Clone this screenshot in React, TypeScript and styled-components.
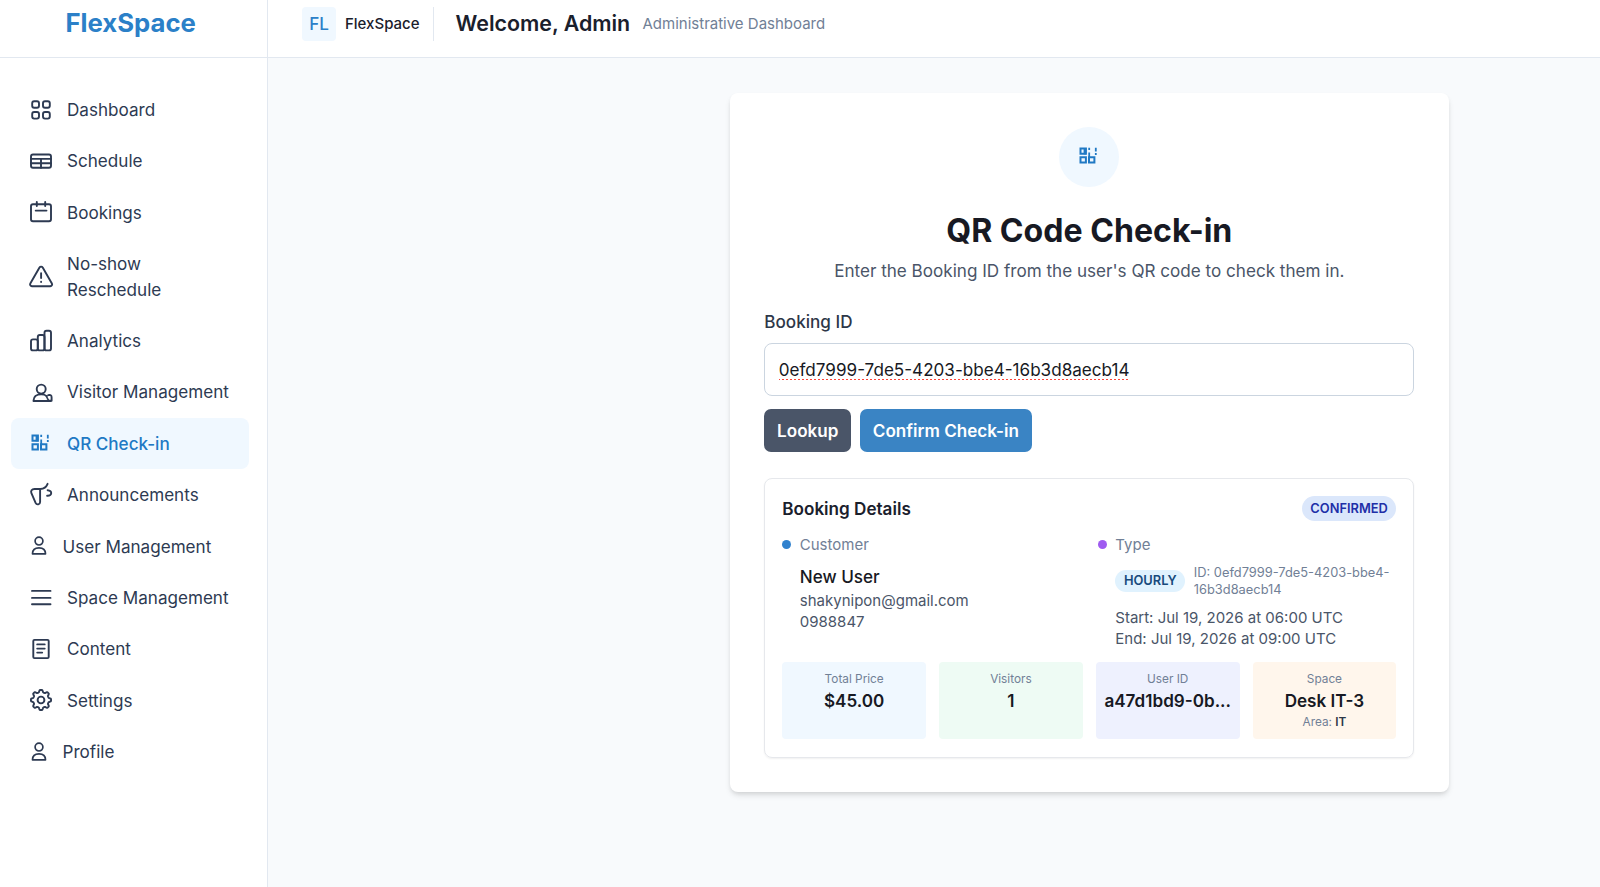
import React from "react";
import styled, { createGlobalStyle, css } from "styled-components";

const GlobalStyle = createGlobalStyle`
  *, *::before, *::after { box-sizing: border-box; }
  html, body { margin: 0; padding: 0; height: 100%; overflow: hidden; }
  body {
    font-family: Inter, "Liberation Sans", sans-serif;
    font-size: 17.1px;
    line-height: 25.7px;
    color: #1a202c;
    background: #f8fafc;
  }
`;

const Shell = styled.div`
  display: flex;
  height: 887px;
  overflow: hidden;
`;

const Sidebar = styled.aside`
  flex: 0 0 268px;
  background: #fff;
  border-right: 1px solid #e2e8f0;
`;

const Brand = styled.div`
  height: 58px;
  padding: 6px 0 0 65.5px;
  border-bottom: 1px solid #e2e8f0;
  color: #2b80c8;
  font-size: 25.7px;
  font-weight: 700;
  line-height: 33px;
`;

const Nav = styled.nav`
  display: flex;
  flex-direction: column;
  padding: 26.1px 18px 0 11px;
`;

const NavItem = styled.a<{ $active?: boolean }>`
  display: flex;
  align-items: center;
  gap: 13px;
  padding: 12.83px 17px;
  border-radius: 8px;
  color: #2d3a52;
  text-decoration: none;
  ${(p) =>
    p.$active &&
    css`
      background: #f0f8ff;
      color: #2079c4;
      font-weight: 500;
    `}
`;

const Glyph = styled.svg<{ $w?: number }>`
  flex: none;
  width: ${(p) => p.$w ?? 26}px;
  height: 26px;
  margin: -1px 0;
  fill: none;
  stroke: currentColor;
  stroke-width: 1.9;
  stroke-linecap: round;
  stroke-linejoin: round;
`;

const Page = styled.div`
  flex: 1;
  display: flex;
  flex-direction: column;
`;

const Header = styled.header`
  height: 58px;
  display: flex;
  align-items: flex-start;
  padding: 6.5px 34px 0;
  background: #fff;
  border-bottom: 1px solid #e2e8f0;
  line-height: 34px;
  white-space: nowrap;
`;

const Monogram = styled.div`
  width: 34px;
  height: 34px;
  margin-right: 9px;
  border-radius: 4px;
  background: #f0f8ff;
  color: #2b80c8;
  font-weight: 500;
  text-align: center;
`;

const HeaderBrand = styled.div`
  width: 89px;
  height: 34px;
  border-right: 1px solid #e2e8f0;
  font-size: 15px;
  font-weight: 500;
`;

const Welcome = styled.h2`
  width: 187px;
  margin: -0.5px 0 0 21.5px;
  font-size: 21.4px;
  font-weight: 600;
`;

const HeaderNote = styled.span`
  color: #718096;
  font-size: 15px;
`;

const Main = styled.main`
  padding: 34.7px 0 0 462px;
`;

const Card = styled.section`
  width: 719px;
  height: 699.3px;
  padding: 34.3px 34.7px 34.3px 34.3px;
  border-radius: 8px;
  background: #fff;
  box-shadow: 0 4px 6px -1px rgba(0, 0, 0, 0.12), 0 2px 4px -1px rgba(0, 0, 0, 0.07);
`;

const Intro = styled.div`
  display: flex;
  flex-direction: column;
  align-items: center;
`;

const IconDisc = styled.div`
  display: flex;
  align-items: center;
  justify-content: center;
  width: 60px;
  height: 60px;
  border-radius: 50%;
  background: #f0f8ff;
  color: #2079c4;
`;

const Title = styled.h1`
  margin: 22.7px 0 7.3px;
  font-size: 32.1px;
  font-weight: 700;
  line-height: 41px;
  color: #171923;
`;

const Subtitle = styled.p`
  margin: 0 0 25.5px;
  color: #4a5568;
`;

const Label = styled.label`
  display: block;
  margin-bottom: 8.5px;
  color: #2d3748;
  font-weight: 500;
`;

const BookingInput = styled.input`
  display: block;
  width: 100%;
  height: 53px;
  padding: 0 13.5px;
  border: 1px solid #cbd5e0;
  border-radius: 8px;
  outline: none;
  color: #171923;
  font: inherit;
  text-decoration: underline dotted #ff4438 2px;
  text-decoration-skip-ink: none;
  text-underline-offset: 3px;
`;

const Actions = styled.div`
  display: flex;
  gap: 8.6px;
  margin: 12.8px 0 26px;
`;

const Button = styled.button<{ $w: number; $bg: string }>`
  width: ${(p) => p.$w}px;
  height: 42.8px;
  padding: 0;
  border: 0;
  border-radius: 7px;
  background: ${(p) => p.$bg};
  color: #fff;
  font: inherit;
  font-weight: 600;
`;

const Details = styled.div`
  height: 280.3px;
  padding: 16.6px 17px 0;
  border: 1px solid #e6e8ec;
  border-radius: 8px;
  box-shadow: 0 1px 2px rgba(0, 0, 0, 0.06);
`;

const DetailsHead = styled.div`
  display: flex;
  align-items: center;
  justify-content: space-between;
  height: 26px;
  font-weight: 600;
`;

const Badge = styled.span<{ $w: number; $h: number; $bg: string; $fg: string }>`
  flex: none;
  width: ${(p) => p.$w}px;
  height: ${(p) => p.$h}px;
  border-radius: 13px;
  background: ${(p) => p.$bg};
  color: ${(p) => p.$fg};
  font-size: 12.85px;
  font-weight: 600;
  line-height: ${(p) => p.$h}px;
  text-align: center;
`;

const Columns = styled.div`
  display: grid;
  grid-template-columns: 315.5px 1fr;
  height: 140.6px;
  padding-top: 10.3px;
`;

const FieldName = styled.div<{ $dot: string }>`
  display: flex;
  align-items: center;
  gap: 8.5px;
  height: 26px;
  color: #718096;
  font-size: 15px;
  &::before {
    content: "";
    width: 9px;
    height: 9px;
    border-radius: 50%;
    background: ${(p) => p.$dot};
  }
`;

const FieldBody = styled.div`
  padding-left: 17.5px;
  color: #4a5568;
  font-size: 15px;
  line-height: 21.4px;
`;

const Customer = styled.div`
  padding: 6px 0 0;
  color: #171923;
  font-size: 17.1px;
  font-weight: 500;
  line-height: 26px;
`;

const TypeRow = styled.div`
  display: flex;
  align-items: center;
  gap: 8.5px;
  height: 34.3px;
  margin: 5.8px 0 8.6px;
  color: #718096;
  font-size: 12.85px;
  line-height: 17.1px;
`;

const Stats = styled.div`
  display: grid;
  grid-template-columns: repeat(4, minmax(0, 1fr));
  gap: 13px;
`;

const Stat = styled.div<{ $bg: string }>`
  height: 76.5px;
  padding: 8.6px;
  border-radius: 4px;
  background: ${(p) => p.$bg};
  text-align: center;
  white-space: nowrap;
`;

const StatSmall = styled.div`
  color: #718096;
  font-size: 11.8px;
  line-height: 17px;
  b { color: #2d3748; font-weight: 600; }
`;

const StatValue = styled.div`
  color: #171923;
  font-weight: 600;
  line-height: 26px;
`;

const gearPath = (() => {
  const pts: string[] = [];
  for (let i = 0; i < 96; i++) {
    const a = (i / 96) * Math.PI * 2;
    const r = 8.95 + 1.15 * Math.tanh(2.2 * Math.cos(8 * a));
    pts.push(`${(13 + r * Math.sin(a)).toFixed(2)} ${(13 - r * Math.cos(a)).toFixed(2)}`);
  }
  return `M${pts.join("L")}Z`;
})();

const QrShapes = () => (
  <g strokeWidth="2" strokeLinejoin="miter" strokeLinecap="butt">
    <path d="M4.5 4.6h5.4v5.2H4.5zM4.5 13.3h5.4v5.2H4.5zM13 13.3h5.4v5.2H13z" />
    <path d="M8.9 4v6.4" strokeWidth="2.6" />
    <path d="M13.2 3.8v2.2M13.2 8.6v4.4M19.8 3.8v3.6M19.8 8.9v2" strokeWidth="1.8" />
  </g>
);

const icons: Record<string, React.ReactNode> = {
  grid: (
    <g>
      <rect x="4.2" y="4.2" width="6.8" height="6.6" rx="2" />
      <rect x="15" y="4.2" width="6.8" height="6.6" rx="2" />
      <rect x="4.2" y="15" width="6.8" height="6.6" rx="2" />
      <rect x="15" y="15" width="6.8" height="6.6" rx="2" />
    </g>
  ),
  table: (
    <g>
      <rect x="3" y="6.5" width="20" height="13.2" rx="2" />
      <path d="M3 10.9h20M3 15.3h20M13 10.9v8.8" />
    </g>
  ),
  calendar: (
    <g>
      <rect x="3" y="5.2" width="20" height="17" rx="2" />
      <path d="M8.8 3v4M17.2 3v4M7.7 11.6h10.8" />
    </g>
  ),
  alert: (
    <g>
      <path d="M11.5 3.5a1.9 1.9 0 0 1 3.2 0l9.2 15.9a1.9 1.9 0 0 1-1.6 2.8H3.9A1.9 1.9 0 0 1 2.3 19.4z" />
      <path d="M13.1 9.3v4.8M13.1 17.8v.2" />
    </g>
  ),
  bars: (
    <g>
      <rect x="3" y="11.4" width="6.8" height="11" rx="2" />
      <rect x="9.8" y="7" width="6.7" height="15.4" rx="2" />
      <rect x="16.5" y="2.8" width="6.5" height="19.6" rx="2" />
    </g>
  ),
  visitor: (
    <g>
      <circle cx="13.2" cy="10.1" r="4.5" />
      <path d="M5.5 21.6c.2-4.2 3.2-6.2 7.7-6.2 2.3 0 4.1.5 5.5 1.7M5.5 22H23M20.2 16.2c2.7-.8 3.4.6 3.4 2.2v3.4H19" />
      <path d="M18.4 17.3l2.2 4.2" strokeWidth="1.6" />
    </g>
  ),
  qr: <QrShapes />,
  megaphone: (
    <g>
      <path d="M19.6 1.8c-1.2 3-3.9 5-7.3 5.2H6.5c-2.8 0-4 2-3.1 4.2l4.2 9.7c1.2 2.5 4.5 1.6 4.5-.9V7" />
      <path d="M19.6 8.2c5.2.5 4.6 5.8-.5 5.6" />
    </g>
  ),
  menu: <path d="M4 5.9h18.5M4 12.9h18.5M4 19.3h18.5" />,
  content: (
    <g>
      <rect x="5.3" y="3.9" width="15.4" height="18.2" rx="1.2" />
      <path d="M9.2 8.4h7.5M9.2 12.6h7.5M9.2 16.6h5" />
    </g>
  ),
  gear: (
    <g>
      <path d={gearPath} />
      <circle cx="13" cy="13" r="3.4" />
    </g>
  ),
  user: (
    <g strokeWidth="1.7">
      <circle cx="11" cy="8.1" r="3.9" />
      <path d="M4.5 20.8c0-4.3 2.8-6 6.5-6s6.5 1.7 6.5 6z" />
    </g>
  ),
};

const navItems: { icon: string; label: string; active?: boolean }[] = [
  { icon: "grid", label: "Dashboard" },
  { icon: "table", label: "Schedule" },
  { icon: "calendar", label: "Bookings" },
  { icon: "alert", label: "No-show Reschedule" },
  { icon: "bars", label: "Analytics" },
  { icon: "visitor", label: "Visitor Management" },
  { icon: "qr", label: "QR Check-in", active: true },
  { icon: "megaphone", label: "Announcements" },
  { icon: "user", label: "User Management" },
  { icon: "menu", label: "Space Management" },
  { icon: "content", label: "Content" },
  { icon: "gear", label: "Settings" },
  { icon: "user", label: "Profile" },
];

const NavText = styled.span<{ $narrow?: boolean }>`
  width: ${(p) => (p.$narrow ? "110px" : "auto")};
  white-space: ${(p) => (p.$narrow ? "normal" : "nowrap")};
`;

export default function App() {
  return (
    <>
      <GlobalStyle />
      <Shell>
        <Sidebar>
          <Brand>FlexSpace</Brand>
          <Nav>
            {navItems.map((n) => {
              const w = n.icon === "user" ? 21.5 : 26;
              return (
                <NavItem key={n.label} $active={n.active}>
                  <Glyph $w={w} viewBox={`0 0 ${w} 26`}>{icons[n.icon]}</Glyph>
                  <NavText $narrow={n.icon === "alert"}>{n.label}</NavText>
                </NavItem>
              );
            })}
          </Nav>
        </Sidebar>
        <Page>
          <Header>
            <Monogram>FL</Monogram>
            <HeaderBrand>FlexSpace</HeaderBrand>
            <Welcome>Welcome, Admin</Welcome>
            <HeaderNote>Administrative Dashboard</HeaderNote>
          </Header>
          <Main>
            <Card>
              <Intro>
                <IconDisc>
                  <Glyph viewBox="0 0 26 26"><QrShapes /></Glyph>
                </IconDisc>
                <Title>QR Code Check-in</Title>
                <Subtitle>Enter the Booking ID from the user's QR code to check them in.</Subtitle>
              </Intro>
              <Label htmlFor="booking">Booking ID</Label>
              <BookingInput id="booking" readOnly value="0efd7999-7de5-4203-bbe4-16b3d8aecb14" />
              <Actions>
                <Button $w={87} $bg="#4a5568">Lookup</Button>
                <Button $w={172} $bg="#3a84c4">Confirm Check-in</Button>
              </Actions>
              <Details>
                <DetailsHead>
                  <span>Booking Details</span>
                  <Badge $w={94.5} $h={25.5} $bg="#dbe7fb" $fg="#1e2fa8">CONFIRMED</Badge>
                </DetailsHead>
                <Columns>
                  <div>
                    <FieldName $dot="#3182ce">Customer</FieldName>
                    <FieldBody>
                      <Customer>New User</Customer>
                      <div>shakynipon@gmail.com</div>
                      <div>0988847</div>
                    </FieldBody>
                  </div>
                  <div>
                    <FieldName $dot="#9f5bf0">Type</FieldName>
                    <FieldBody>
                      <TypeRow>
                        <Badge $w={70} $h={21.5} $bg="#e0f2fe" $fg="#174a7c">HOURLY</Badge>
                        <span>ID: 0efd7999-7de5-4203-bbe4-<br />16b3d8aecb14</span>
                      </TypeRow>
                      <div>Start: Jul 19, 2026 at 06:00 UTC</div>
                      <div>End: Jul 19, 2026 at 09:00 UTC</div>
                    </FieldBody>
                  </div>
                </Columns>
                <Stats>
                  <Stat $bg="#f0f8ff">
                    <StatSmall>Total Price</StatSmall>
                    <StatValue>$45.00</StatValue>
                  </Stat>
                  <Stat $bg="#eefbf4">
                    <StatSmall>Visitors</StatSmall>
                    <StatValue>1</StatValue>
                  </Stat>
                  <Stat $bg="#eef1fe">
                    <StatSmall>User ID</StatSmall>
                    <StatValue>a47d1bd9-0b...</StatValue>
                  </Stat>
                  <Stat $bg="#fff6ec">
                    <StatSmall>Space</StatSmall>
                    <StatValue>Desk IT-3</StatValue>
                    <StatSmall>Area: <b>IT</b></StatSmall>
                  </Stat>
                </Stats>
              </Details>
            </Card>
          </Main>
        </Page>
      </Shell>
    </>
  );
}
